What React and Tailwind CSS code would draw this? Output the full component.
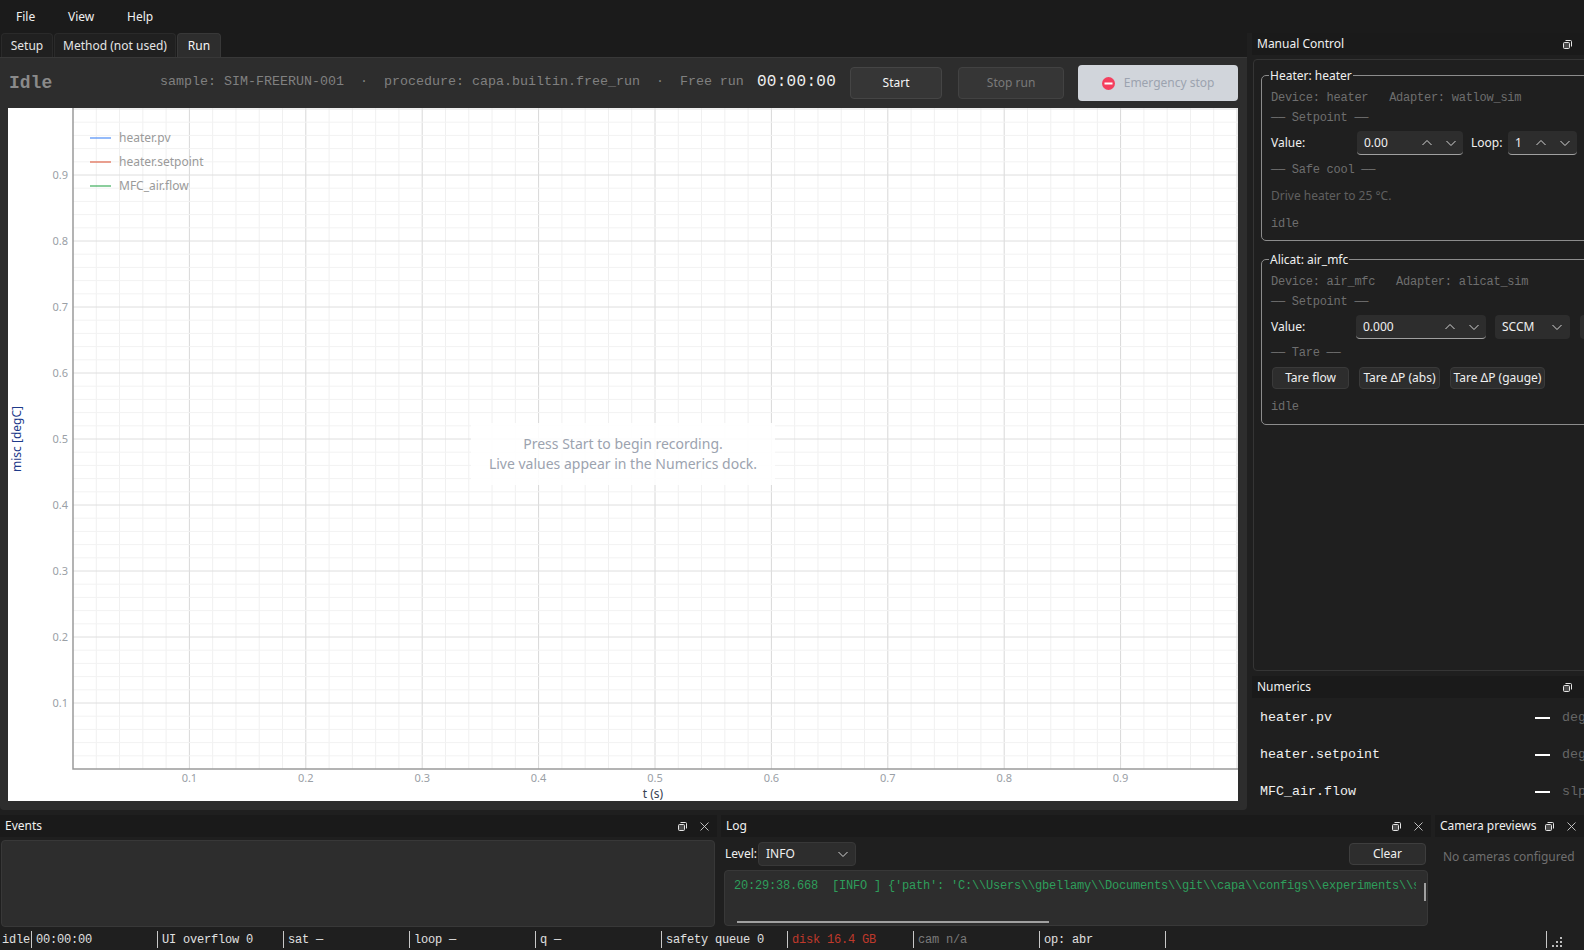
import React from 'react';

const mono = 'font-["Liberation_Mono",monospace]';

const Chevron = ({ up }) => (
  <svg width="12" height="8" viewBox="0 0 12 8" fill="none" stroke="#d4d4d4" strokeWidth="1">
    <path d={up ? 'M1.5 6 6 1.5 10.5 6' : 'M1.5 2 6 6.5 10.5 2'} />
  </svg>
);

const DockTitle = ({ title }) => (
  <div className="h-[22px] shrink-0 bg-[#1a1a1a] pl-[5px] pr-[2px] flex items-center justify-between text-[#f0f0f0]">
    <span className="whitespace-nowrap">{title}</span>
    <div className="flex">
      <div className="w-[22px] h-[16px] flex items-center justify-center">
        <svg width="9" height="9" viewBox="0 0 9 9" fill="none" stroke="#e5e5e5" strokeWidth="1">
          <rect x="0.5" y="2.5" width="6" height="6" rx="1" fill="#e5e5e5" fillOpacity="0.25" />
          <path d="M2.5 0.5h5a1 1 0 0 1 1 1v5" />
        </svg>
      </div>
      <div className="w-[22px] h-[16px] flex items-center justify-center">
        <svg width="9" height="9" viewBox="0 0 9 9" fill="none" stroke="#d0d0d0" strokeWidth="0.9">
          <path d="M0.5 0.5l8 8M8.5 0.5l-8 8" />
        </svg>
      </div>
    </div>
  </div>
);

const Spin = ({ value, width, textWidth }) => (
  <div className={`${width} h-[24px] shrink-0 bg-[#2d2d2d] rounded-[4px] border-b border-[#a0a0a0] flex items-center pl-[7px] pr-[6px] text-[#f0f0f0]`}>
    <span className="flex-1">{value}</span>
    <div className="flex gap-[12px]">
      <Chevron up />
      <Chevron />
    </div>
  </div>
);

const MonoRow = ({ children, className = '' }) => (
  <div className={`h-[20px] flex items-center whitespace-pre ${mono} text-[12px] tracking-[-0.25px] text-[#6e6e6e] ${className}`}>
    {children}
  </div>
);

const GroupBox = ({ title, height, children }) => (
  <div className={`relative ${height} w-[340px] shrink-0 border border-[#8c8c8c] rounded-[5px] pt-[12px] pl-[9px]`}>
    <div className="absolute -top-[10px] left-[7px] h-[20px] px-px flex items-center bg-[#1f1f1f] text-[#f0f0f0] whitespace-nowrap">
      {title}
    </div>
    {children}
  </div>
);

const SmallButton = ({ label, width }) => (
  <div className={`${width} h-[22px] bg-[#2d2d2d] border border-[#3a3a3a] rounded-[4px] flex items-center justify-center text-[#f0f0f0] whitespace-nowrap`}>
    {label}
  </div>
);

const ManualControl = () => (
  <div className="h-[615px] mt-[4px] ml-px bg-[#1f1f1f] border border-[#353535] rounded-[4px] overflow-hidden pl-[7px] pt-[15px]">
    <GroupBox title="Heater: heater" height="h-[166px]">
      <MonoRow>{'Device: heater   Adapter: watlow_sim'}</MonoRow>
      <MonoRow>{'── Setpoint ──'}</MonoRow>
      <div className="mt-[3px] flex items-center text-[#f0f0f0]">
        <span className="w-[86px]">Value:</span>
        <Spin value="0.00" width="w-[106px]" />
        <span className="ml-[8px] w-[37px]">Loop:</span>
        <Spin value="1" width="w-[69px]" />
      </div>
      <MonoRow className="mt-[5px]">{'── Safe cool ──'}</MonoRow>
      <div className="mt-[6px] h-[20px] flex items-center text-[#5f5f5f]">Drive heater to 25 °C.</div>
      <MonoRow className="mt-[8px]">idle</MonoRow>
    </GroupBox>
    <GroupBox title="Alicat: air_mfc" height="h-[166px] mt-[18px]">
      <MonoRow>{'Device: air_mfc   Adapter: alicat_sim'}</MonoRow>
      <MonoRow>{'── Setpoint ──'}</MonoRow>
      <div className="mt-[3px] flex items-center text-[#f0f0f0]">
        <span className="w-[86px]">Value:</span>
        <Spin value="0.000" width="w-[130px]" />
        <div className="ml-[9px] w-[76px] h-[24px] bg-[#2d2d2d] rounded-[4px] flex items-center justify-between pl-[7px] pr-[7px]">
          SCCM
          <Chevron />
        </div>
        <div className="ml-[10px] w-[20px] h-[24px] bg-[#2d2d2d] rounded-[4px]" />
      </div>
      <MonoRow className="mt-[4px]">{'── Tare ──'}</MonoRow>
      <div className="mt-[4px] ml-[1px] flex gap-[10px]">
        <SmallButton label="Tare flow" width="w-[77px]" />
        <SmallButton label="Tare ΔP (abs)" width="w-[81px]" />
        <SmallButton label="Tare ΔP (gauge)" width="w-[95px]" />
      </div>
      <MonoRow className="mt-[8px]">idle</MonoRow>
    </GroupBox>
  </div>
);

const numerics = [
  { name: 'heater.pv', unit: 'degC' },
  { name: 'heater.setpoint', unit: 'degC' },
  { name: 'MFC_air.flow', unit: 'slpm' },
];

const Numerics = () => (
  <div className="pt-[1px] pl-[8px] pr-[8px]">
    {numerics.map((n) => (
      <div key={n.name} className={`h-[37px] flex items-center ${mono} text-[13.33px]`}>
        <span className="flex-1 text-[#f0f0f0]">{n.name}</span>
        <span className="w-[15px] h-[2px] bg-white" />
        <span className="ml-[12px] text-[#666]">{n.unit}</span>
      </div>
    ))}
  </div>
);

const xs = Array.from({ length: 51 }, (_, i) => i);

const Chart = () => (
  <svg className="block" width="1230" height="693" viewBox="8 108 1230 693">
    {xs.map((i) => {
      const x = 73 + i * 23.28;
      const major = i % 5 === 0;
      return i > 0 ? <line key={`v${i}`} x1={x} x2={x} y1="108" y2="769" stroke={major ? '#d8d8d8' : '#f0f0f0'} /> : null;
    })}
    {xs.map((i) => {
      const y = 769 - i * 13.2;
      const major = i % 5 === 0;
      return i > 0 ? <line key={`h${i}`} x1="73" x2="1238" y1={y} y2={y} stroke={major ? '#dedede' : '#f2f2f2'} /> : null;
    })}
    <path d="M73 108V769H1238" fill="none" stroke="#9a9a9a" strokeWidth="1.5" />
    {[1, 2, 3, 4, 5, 6, 7, 8, 9].map((n) => (
      <text key={`xl${n}`} x={73 + n * 116.4} y="782" textAnchor="middle" fontSize="11" fill="#9aa0a6" fontFamily="Noto Sans">
        {`0.${n}`}
      </text>
    ))}
    {[1, 2, 3, 4, 5, 6, 7, 8, 9].map((n) => (
      <text key={`yl${n}`} x="68" y={769 - n * 66 + 4} textAnchor="end" fontSize="11" fill="#9aa0a6" fontFamily="Noto Sans">
        {`0.${n}`}
      </text>
    ))}
    <text x="653" y="798" textAnchor="middle" fontSize="12" fill="#374151" fontFamily="Noto Sans">t (s)</text>
    <text transform="translate(21 439) rotate(-90)" textAnchor="middle" fontSize="12" fill="#1e3a8a" fontFamily="Noto Sans">misc [degC]</text>
    {[
      { y: 138, c: '#4f8ef7', t: 'heater.pv' },
      { y: 162, c: '#e0654a', t: 'heater.setpoint' },
      { y: 186, c: '#3fae5c', t: 'MFC_air.flow' },
    ].map((l) => (
      <g key={l.t}>
        <line x1="90" x2="111" y1={l.y} y2={l.y} stroke={l.c} strokeWidth="1.2" />
        <text x="119" y={l.y + 4} fontSize="12" fill="#9a9a9a" fontFamily="Noto Sans">{l.t}</text>
      </g>
    ))}
  </svg>
);

const RunPanel = () => (
  <div className="h-[753px] bg-[#2d2d2d] border-t border-[#383838] rounded-b-[4px]">
    <div className="h-[50px] flex items-center pl-[9px] whitespace-pre">
      <span className={`w-[151px] ${mono} font-bold text-[18px] text-[#8a8a8a]`}>Idle</span>
      <span className={`${mono} text-[13.33px] text-[#808080] -mt-[2px]`}>
        {'sample: SIM-FREERUN-001  ·  procedure: capa.builtin.free_run  ·  Free run'}
      </span>
      <span className={`ml-[13px] ${mono} text-[16px] tracking-[0.3px] text-[#f0f0f0] -mt-[2px]`}>00:00:00</span>
      <div className="ml-[14px] w-[92px] h-[32px] bg-[#363636] border border-[#454545] rounded-[4px] flex items-center justify-center text-[#f5f5f5]">
        Start
      </div>
      <div className="ml-[16px] w-[106px] h-[32px] bg-[#363636] border border-[#424242] rounded-[4px] flex items-center justify-center text-[#7a7a7a]">
        Stop run
      </div>
      <div className="ml-[14px] w-[160px] h-[36px] bg-[#d1d5db] rounded-[4px] flex items-center justify-center gap-[9px] text-[#9ca3af]">
        <svg width="13" height="13" viewBox="0 0 13 13">
          <circle cx="6.5" cy="6.5" r="6.5" fill="#f43f5e" />
          <rect x="2.5" y="5.5" width="8" height="2" fill="#fff" />
        </svg>
        Emergency stop
      </div>
    </div>
    <div className="relative ml-[8px] w-[1230px] h-[693px] bg-white mt-[0px]">
      <Chart />
      <div className="absolute left-[463px] top-[315px] w-[304px] h-[62px] bg-white/90 flex flex-col items-center justify-center text-[14px] leading-[20.5px] text-[#9ca3af]">
        <span>Press Start to begin recording.</span>
        <span>Live values appear in the Numerics dock.</span>
      </div>
    </div>
  </div>
);

const statusCells = [
  { t: '00:00:00', c: 'text-[#e0e0e0]' },
  { t: 'UI overflow 0', c: 'text-[#e0e0e0]' },
  { t: 'sat —', c: 'text-[#e0e0e0]' },
  { t: 'loop —', c: 'text-[#e0e0e0]' },
  { t: 'q —', c: 'text-[#e0e0e0]' },
  { t: 'safety queue 0', c: 'text-[#e0e0e0]' },
  { t: 'disk 16.4 GB', c: 'text-[#c0392b]' },
  { t: 'cam n/a', c: 'text-[#7a7a7a]' },
  { t: 'op: abr', c: 'text-[#e0e0e0]' },
];

const StatusBar = () => (
  <div className={`h-[23px] shrink-0 flex items-center pt-[2px] ${mono} text-[12px] tracking-[-0.2px]`}>
    <span className="w-[31px] pl-[2px] text-[#e0e0e0]">idle</span>
    {statusCells.map((s) => (
      <div key={s.t} className={`w-[126px] h-[17px] shrink-0 border-l border-[#c8c8c8] pl-[4px] flex items-center whitespace-pre ${s.c}`}>
        {s.t}
      </div>
    ))}
    <div className="w-[399px] h-[17px] border-l border-[#c8c8c8] flex justify-end items-end">
      <div className="w-[18px] h-[17px] border-l border-[#c8c8c8] flex items-end justify-end pr-[2px] pb-[1px]">
        <svg width="10" height="10" viewBox="0 0 10 10" fill="#bdbdbd">
          <rect x="8" y="0" width="2" height="2" />
          <rect x="4" y="4" width="2" height="2" />
          <rect x="8" y="4" width="2" height="2" />
          <rect x="0" y="8" width="2" height="2" />
          <rect x="4" y="8" width="2" height="2" />
          <rect x="8" y="8" width="2" height="2" />
        </svg>
      </div>
    </div>
  </div>
);

const App = () => {
  return (
    <div className='w-[1584px] h-[950px] overflow-hidden flex flex-col bg-[#1f1f1f] font-["Noto_Sans",sans-serif] text-[12px] text-[#e5e5e5]'>
      <div className="h-[33px] shrink-0 bg-[#1b1b1b] flex items-center text-[#f0f0f0]">
        <span className="ml-[16px] w-[52px]">File</span>
        <span className="w-[59px]">View</span>
        <span>Help</span>
      </div>

      <div className="h-[777px] shrink-0 flex">
        <div className="w-[1247px] shrink-0">
          <div className="h-[24px] flex pl-px gap-px bg-[#1b1b1b]">
            <div className="w-[52px] bg-[#202020] border border-b-0 border-[#2a2a2a] rounded-t-[4px] flex items-center justify-center text-[#e5e5e5]">Setup</div>
            <div className="w-[122px] bg-[#202020] border border-b-0 border-[#2a2a2a] rounded-t-[4px] flex items-center justify-center text-[#e5e5e5]">Method (not used)</div>
            <div className="w-[44px] bg-[#2d2d2d] border border-b-0 border-[#383838] rounded-t-[4px] flex items-center justify-center text-[#f5f5f5]">Run</div>
          </div>
          <RunPanel />
        </div>
        <div className="flex-1 pl-[5px] flex flex-col">
          <DockTitle title="Manual Control" />
          <ManualControl />
          <div className="mt-[5px]">
            <DockTitle title="Numerics" />
            <Numerics />
          </div>
        </div>
      </div>

      <div className="mt-[5px] h-[112px] shrink-0 flex gap-[4px]">
        <div className="w-[717px] shrink-0">
          <DockTitle title="Events" />
          <div className="ml-px mr-[2px] mt-[3px] h-[87px] bg-[#2d2d2d] border border-[#383838] rounded-[4px]" />
        </div>
        <div className="w-[710px] shrink-0">
          <DockTitle title="Log" />
          <div className="h-[29px] pl-[4px] pr-[5px] flex items-center justify-between pt-[5px]">
            <div className="flex items-center gap-[2px] text-[#f0f0f0]">
              <span className="w-[31px]">Level:</span>
              <div className="w-[98px] h-[24px] bg-[#2d2d2d] border border-[#383838] rounded-[4px] flex items-center justify-between pl-[7px] pr-[6px]">
                INFO
                <Chevron />
              </div>
            </div>
            <div className="w-[77px] h-[22px] bg-[#2d2d2d] border border-[#3e3e3e] rounded-[4px] flex items-center justify-center text-[#f0f0f0]">Clear</div>
          </div>
          <div className="relative ml-[3px] mr-[3px] mt-[4px] h-[56px] bg-[#2d2d2d] border border-[#383838] rounded-[4px] overflow-hidden">
            <div className={`pl-[9px] pt-[6px] w-[691px] overflow-hidden whitespace-pre ${mono} text-[12px] tracking-[-0.2px] text-[#2e9e5b]`}>
              {"20:29:38.668  [INFO ] {'path': 'C:\\\\Users\\\\gbellamy\\\\Documents\\\\git\\\\capa\\\\configs\\\\experiments\\\\sim_freerun.yaml'}"}
            </div>
            <div className="absolute right-[1px] top-[12px] w-[2px] h-[18px] bg-[#a0a0a0]" />
            <div className="absolute left-[12px] bottom-[2px] w-[312px] h-[2px] bg-[#a0a0a0]" />
          </div>
        </div>
        <div className="w-[149px] shrink-0">
          <DockTitle title="Camera previews" />
          <div className="pl-[8px] pt-[11px] text-[#6f6f6f] whitespace-nowrap">No cameras configured</div>
        </div>
      </div>

      <StatusBar />
    </div>
  );
};

export default App;
